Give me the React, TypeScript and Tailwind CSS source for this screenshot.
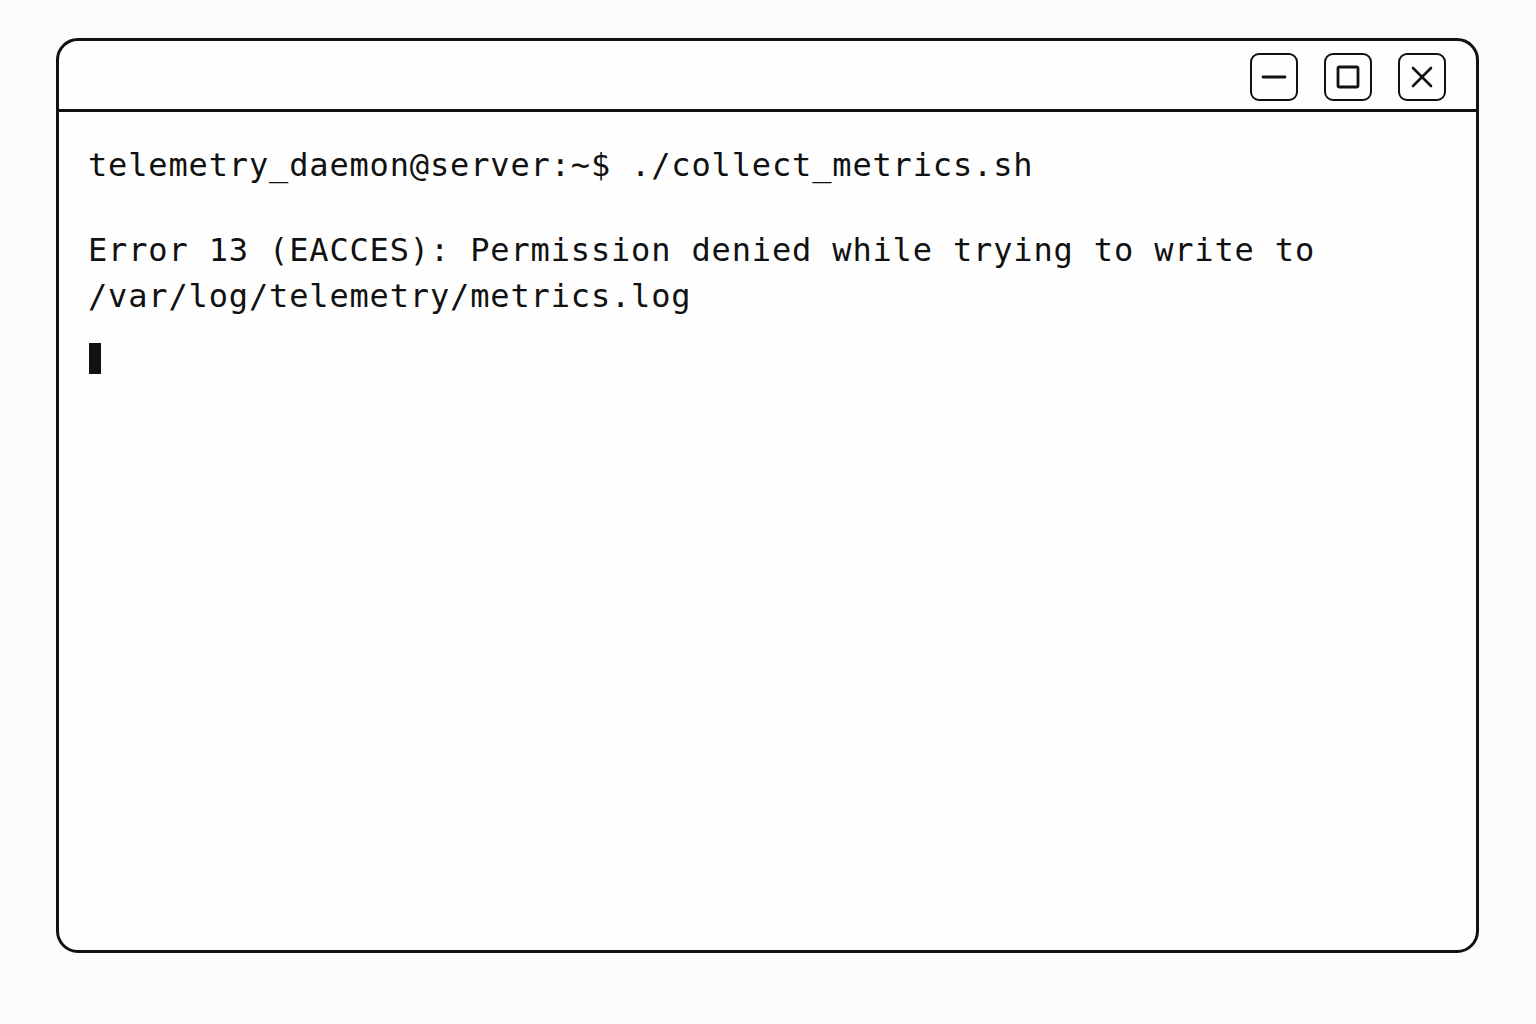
export default function App() {
  return (
    <div className="min-h-screen w-full bg-[#fbfbfb] pt-[38px] pl-[56px]">
      <div className="w-[1423px] h-[915px] rounded-[22px] border-[3px] border-[#111] bg-[#fefefe] flex flex-col overflow-hidden">
        {/* title bar */}
        <div className="h-[71px] shrink-0 border-b-[3px] border-[#111] flex items-center justify-end gap-[26px] pr-[30px] pt-[3px]">
          <button className="w-[48px] h-[48px] rounded-[9px] border-[2.5px] border-[#111] flex items-center justify-center">
            <svg width="26" height="26" viewBox="0 0 26 26" fill="none" stroke="#111" strokeWidth="2.8" strokeLinecap="round">
              <path d="M2 13h22" />
            </svg>
          </button>
          <button className="w-[48px] h-[48px] rounded-[9px] border-[2.5px] border-[#111] flex items-center justify-center">
            <svg width="26" height="26" viewBox="0 0 26 26" fill="none" stroke="#111" strokeWidth="2.8">
              <rect x="3" y="3" width="20" height="20" rx="1.5" />
            </svg>
          </button>
          <button className="w-[48px] h-[48px] rounded-[9px] border-[2.5px] border-[#111] flex items-center justify-center">
            <svg width="26" height="26" viewBox="0 0 26 26" fill="none" stroke="#111" strokeWidth="2.6" strokeLinecap="round">
              <path d="M4 4l18 18M22 4L4 22" />
            </svg>
          </button>
        </div>

        {/* terminal body */}
        <div className="flex-1 pt-[30px] pl-[29px] font-['DejaVu_Sans_Mono',monospace] text-[32px] leading-[46px] tracking-[0.85px] text-[#111]">
          <div>telemetry_daemon@server:~$ ./collect_metrics.sh</div>
          <div className="mt-[39px]">
            <div>Error 13 (EACCES): Permission denied while trying to write to</div>
            <div>/var/log/telemetry/metrics.log</div>
          </div>
          <div className="mt-[24px] ml-[1px] w-[12px] h-[31px] bg-[#111]" />
        </div>
      </div>
    </div>
  );
}
